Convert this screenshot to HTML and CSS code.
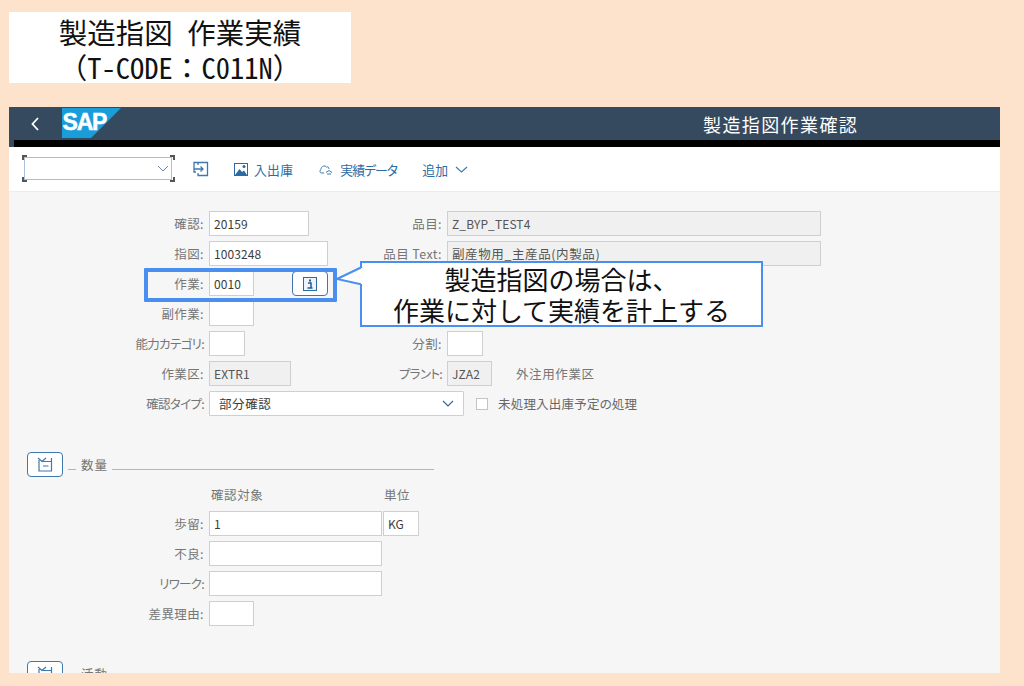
FILE: index.html
```html
<!DOCTYPE html>
<html lang="ja">
<head>
<meta charset="utf-8">
<title>製造指図 作業実績</title>
<link rel="stylesheet" href="styles.css">
</head>
<body>
<div class="page">
  <div class="title-box">
    <div>製造指図<span class="half">　</span>作業実績</div>
    <div>（<span class="half">T-CODE</span>：<span class="half">C011N</span>）</div>
  </div>
  <div class="window">
    <header class="shell">
      <div class="shell-main">
        <svg class="back" width="12" height="16" viewBox="0 0 12 16"><path d="M9 2 3.500 8 9 14" fill="none" stroke="#fff" stroke-width="1.800"/></svg>
        <svg class="logo" width="59" height="30" viewBox="0 0 59 30">
          <polygon points="0,0 59,0 29,30 0,30" fill="#1a9ddb"/>
          <text x="0.500" y="22" class="logo-text">SAP</text>
        </svg>
        <div class="shell-title">製造指図作業確認</div>
      </div>
      <div class="shell-black"></div>
    </header>
    <nav class="toolbar">
      <div class="cmd">
        <svg class="chev" width="12" height="7" viewBox="0 0 12 7"><path d="M1 1 6 6 11 1" fill="none" stroke="#6d8aa8" stroke-width="1"/></svg>
        <i class="corner tl"></i><i class="corner tr"></i><i class="corner bl"></i><i class="corner br"></i>
      </div>
      <svg class="tb-enter" width="16" height="16" viewBox="0 0 16 16" fill="none" stroke="#3f78ad" stroke-width="1.300"><path d="M5 4V1.500H14.500V14.500H5V12M5 1.500H1V11H3M1 8H10M7.500 5.500 10 8 7.500 10.500"/></svg>
      <span class="tb-item tb-first">
        <svg width="14" height="13" viewBox="0 0 14 13"><rect x="0.500" y="0.500" width="13" height="12" fill="#fff" stroke="#2b6aa3"/><path d="M1 12 5.500 6 8 9 10 7.500 13 12Z" fill="#2b6aa3"/><circle cx="10" cy="3.500" r="1.500" fill="#2b6aa3"/></svg>
        入出庫
      </span>
      <span class="tb-item tb-second">
        <svg width="15" height="12" viewBox="0 0 15 12" fill="none" stroke="#3f78ad"><path d="M5 10H2.500C.5 10 .5 7 2 6.500 2 3 6 2 7.500 4 9 3.500 10 4.500 10 6"/><path d="M7 9.500 10 7.500 13 9.500M8 11H12"/></svg>
        実績データ
      </span>
      <span class="tb-item tb-third">
        追加
        <svg width="13" height="7" viewBox="0 0 13 7"><path d="M1 1 6.500 6 12 1" fill="none" stroke="#3f78ad" stroke-width="1.100"/></svg>
      </span>
    </nav>
    <main class="form">
      <div class="row">
        <label class="lbl">確認:</label><span class="fld w100">20159</span>
        <label class="lbl lbl-r">品目:</label><span class="fld ro w374">Z_BYP_TEST4</span>
      </div>
      <div class="row">
        <label class="lbl">指図:</label><span class="fld w119">1003248</span>
        <label class="lbl lbl-r2">品目 Text:</label><span class="fld ro w374 jp">副産物用_主産品(内製品)</span>
      </div>
      <div class="row">
        <label class="lbl">作業:</label><span class="fld w45">0010</span>
        <button class="info-btn" type="button"><svg width="14" height="14" viewBox="0 0 14 14"><rect x="0.500" y="0.500" width="13" height="13" fill="#eef4fa" stroke="#2b6aa3"/><path d="M5 6H8V11H9.500M4.500 11H8" fill="none" stroke="#1f5c96" stroke-width="1.500"/><rect x="6" y="2.500" width="2" height="2" fill="#1f5c96"/></svg></button>
      </div>
      <div class="row">
        <label class="lbl">副作業:</label><span class="fld w45"></span>
      </div>
      <div class="row">
        <label class="lbl kana">能力カテゴリ:</label><span class="fld w36"></span>
        <label class="lbl lbl-r3">分割:</label><span class="fld w36"></span>
      </div>
      <div class="row">
        <label class="lbl">作業区:</label><span class="fld ro w82">EXTR1</span>
        <label class="lbl lbl-r4 kana">プラント:</label><span class="fld ro w45">JZA2</span>
        <span class="plain">外注用作業区</span>
      </div>
      <div class="row">
        <label class="lbl kana">確認タイプ:</label>
        <span class="fld sel jp">部分確認<svg width="12" height="7" viewBox="0 0 12 7"><path d="M1 1 6 6 11 1" fill="none" stroke="#2b6aa3" stroke-width="1.200"/></svg></span>
        <span class="check"></span>
        <span class="check-text">未処理入出庫予定の処理</span>
      </div>

      <section class="sect sect-qty">
        <button class="sect-btn" type="button"><svg width="16" height="15" viewBox="0 0 16 15" fill="none" stroke="#3f78ad" stroke-width="1.200"><path d="M1 1 5 4.500 9 1M2 3V14H14.500V1M5 4.500H14.500M6 9H11.500"/></svg></button>
        <span class="sect-dash"></span>
        <span class="sect-name">数量</span>
        <span class="sect-line"></span>
      </section>
      <div class="cols">
        <span class="col-a">確認対象</span><span class="col-b">単位</span>
      </div>
      <div class="row">
        <label class="lbl">歩留:</label><span class="fld w173">1</span><span class="fld unit">KG</span>
      </div>
      <div class="row">
        <label class="lbl">不良:</label><span class="fld w173"></span>
      </div>
      <div class="row">
        <label class="lbl kana">リワーク:</label><span class="fld w173"></span>
      </div>
      <div class="row">
        <label class="lbl">差異理由:</label><span class="fld w45"></span>
      </div>

      <section class="sect sect-act">
        <button class="sect-btn" type="button"><svg width="16" height="15" viewBox="0 0 16 15" fill="none" stroke="#3f78ad" stroke-width="1.200"><path d="M1 1 5 4.500 9 1M2 3V14H14.500V1M5 4.500H14.500M6 9H11.500"/></svg></button>
        <span class="sect-dash sect-dash-none"></span>
        <span class="sect-name">活動</span>
      </section>
    </main>

    <div class="highlight"></div>
    <div class="callout">
      <svg class="tail" width="30" height="26" viewBox="0 0 30 26"><path d="M27 4 2 16 27 21.500" fill="#fff" stroke="#4a8ff0" stroke-width="2"/><rect x="26" y="5" width="4" height="16" fill="#fff"/></svg>
      <div>製造指図の場合は、</div>
      <div>作業に対して実績を計上する</div>
    </div>
  </div>
</div>
</body>
</html>
```
FILE: styles.css
```css
* { box-sizing: border-box; }
html, body { margin: 0; padding: 0; }
body {
  background: #fde3cb;
  font-family: "Noto Sans CJK JP", "Liberation Sans", sans-serif;
  overflow: hidden;
}
.page {
  width: 1024px;
  height: 686px;
  padding: 12px 24px 13px 9px;
  overflow: hidden;
}
.title-box {
  width: 342px;
  height: 71px;
  background: #fff;
  color: #111;
  text-align: center;
  font-size: 28.500px;
  line-height: 35px;
  padding-top: 2px;
  white-space: nowrap;
}
.half { font-feature-settings: "hwid"; }
.window {
  position: relative;
  margin-top: 24px;
  width: 991px;
  height: 566px;
  background: #f6f6f6;
  overflow: hidden;
}
.shell { height: 40px; background: #364a5f; }
.shell-main {
  height: 33px;
  display: flex;
  align-items: flex-start;
  position: relative;
}
.back { margin: 9px 0 0 20px; }
.logo { margin: 1px 0 0 21px; }
.logo-text {
  font-family: "Liberation Sans", sans-serif;
  font-weight: 700;
  font-size: 23px;
  letter-spacing: -1.200px;
  fill: #fff;
  stroke: #fff;
  stroke-width: 0.500px;
}
.shell-title {
  position: absolute;
  left: 694px;
  top: 3px;
  color: #fff;
  font-size: 18px;
  letter-spacing: 1.400px;
  line-height: 28px;
  white-space: nowrap;
}
.shell-black { height: 7px; margin-left: 5px; background: #000; }
.toolbar {
  height: 45px;
  background: #fff;
  border-bottom: 1px solid #ededed;
  display: flex;
  align-items: center;
  color: #2b6aa3;
  font-size: 12.800px;
  font-feature-settings: "palt";
  letter-spacing: 0.300px;
  padding-left: 15px;
}
.cmd {
  position: relative;
  width: 148px;
  height: 23px;
  margin-bottom: 2px;
  border: 1.500px solid #a9c0d8;
  display: flex;
  align-items: center;
  justify-content: flex-end;
  padding-right: 2px;
}
.corner { position: absolute; width: 5px; height: 5px; border: 0 solid #555; }
.corner.tl { left: -3px; top: -3px; border-width: 2px 0 0 2px; }
.corner.tr { right: -4px; top: -3px; border-width: 2px 2px 0 0; }
.corner.bl { left: -3px; bottom: -3px; border-width: 0 0 2px 2px; }
.corner.br { right: -4px; bottom: -3px; border-width: 0 2px 2px 0; }
.tb-enter { margin-left: 21px; }
.tb-item { display: inline-flex; align-items: center; gap: 6px; white-space: nowrap; }
.tb-first { margin-left: 25px; }
.tb-second { margin-left: 26px; letter-spacing: -0.900px; }
.tb-third { margin-left: 25px; }
.tb-third svg { margin-left: 1px; }
.form {
  padding-top: 19px;
  font-size: 12.500px;
  font-feature-settings: "palt";
  color: #666;
  height: 526px;
}
.row { display: flex; height: 25px; margin-bottom: 5px; align-items: center; white-space: nowrap; }
.lbl { width: 200px; text-align: right; padding-right: 5px; color: #757575; letter-spacing: 0.400px; }
.kana { letter-spacing: -0.700px; }
.fld {
  display: block;
  height: 25px;
  line-height: 23px;
  border: 1px solid #cfcfd3;
  background: #fff;
  padding-left: 4px;
  color: #3c3c3c;
  font-size: 12px;
  letter-spacing: 0.100px;
}
.jp { font-size: 12.500px; letter-spacing: 0.600px; }
.ro { background: #f0f0f0; color: #555; }
.w36 { width: 36px; }
.w45 { width: 45px; }
.w82 { width: 82px; }
.w100 { width: 100px; }
.w119 { width: 119px; }
.w173 { width: 173px; }
.w374 { width: 374px; }
.lbl-r { width: 138px; }
.lbl-r2 { width: 119px; }
.lbl-r3 { width: 202px; }
.lbl-r4 { width: 156px; }
.unit { width: 36px; margin-left: 1px; }
.plain { margin-left: 24px; color: #757575; letter-spacing: 0.600px; }
.sel {
  width: 255px;
  display: flex;
  justify-content: space-between;
  align-items: center;
  padding: 0 9px 0 9px;
  border-radius: 1px;
}
.check {
  width: 12px;
  height: 12px;
  border: 1px solid #c4c4c8;
  background: #fff;
  margin-left: 12px;
}
.check-text { margin-left: 10px; color: #666; letter-spacing: 0.200px; }
.info-btn {
  margin-left: 38px;
  width: 36px;
  height: 25px;
  background: #fff;
  border: 1px solid #3f78ad;
  border-radius: 4px;
  padding: 0;
  display: flex;
  align-items: center;
  justify-content: center;
}
.sect { display: flex; align-items: center; height: 25px; margin-left: 18px; }
.sect-qty { margin-top: 36px; }
.sect-act { margin-top: 35px; }
.sect-btn {
  width: 36px;
  height: 25px;
  background: #fff;
  border: 1px solid #3f78ad;
  border-radius: 4px;
  padding: 0;
  display: flex;
  align-items: center;
  justify-content: center;
}
.sect-dash { width: 8px; height: 1px; background: #b5b5b5; margin: 9px 5px 0 5px; }
.sect-dash-none { background: transparent; }
.sect-name { color: #757575; letter-spacing: 1px; }
.sect-line { width: 322px; height: 1px; background: #b5b5b5; margin: 9px 0 0 4px; }
.cols { height: 30px; padding-left: 202px; display: flex; align-items: center; color: #757575; margin-top: 2px; letter-spacing: 0.600px; }
.col-a { width: 173px; }
.cols + .row { margin-top: 2px; }
.highlight {
  position: absolute;
  left: 135px;
  top: 161px;
  width: 193px;
  height: 34px;
  border: 4px solid #4a8ff0;
  border-radius: 1px;
}
.callout {
  position: absolute;
  left: 351px;
  top: 154px;
  width: 403px;
  height: 66px;
  background: #fff;
  border: 2px solid #4a8ff0;
  color: #111;
  font-size: 26px;
  line-height: 31px;
  text-align: center;
  white-space: nowrap;
}
.tail { position: absolute; left: -27px; top: 0; }
```
